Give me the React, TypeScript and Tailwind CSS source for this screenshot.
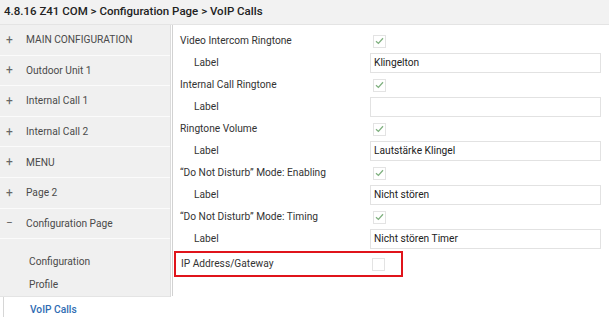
import React from "react";

type Row = {
  label: string;
  sub?: boolean;
  kind: "check" | "input";
  value?: string;
};

const rows: Row[] = [
  { label: "Video Intercom Ringtone", kind: "check" },
  { label: "Label", sub: true, kind: "input", value: "Klingelton" },
  { label: "Internal Call Ringtone", kind: "check" },
  { label: "Label", sub: true, kind: "input", value: "" },
  { label: "Ringtone Volume", kind: "check" },
  { label: "Label", sub: true, kind: "input", value: "Lautstärke Klingel" },
  { label: "\u201CDo Not Disturb\u201D Mode: Enabling", kind: "check" },
  { label: "Label", sub: true, kind: "input", value: "Nicht stören" },
  { label: "\u201CDo Not Disturb\u201D Mode: Timing", kind: "check" },
  { label: "Label", sub: true, kind: "input", value: "Nicht stören Timer" },
];

const menu = [
  "MAIN CONFIGURATION",
  "Outdoor Unit 1",
  "Internal Call 1",
  "Internal Call 2",
  "MENU",
  "Page 2",
];

const Check = ({ on }: { on: boolean }) => (
  <div className="w-[13px] h-[13px] border border-[#e3e3e3] bg-white flex items-center justify-center">
    {on && (
      <svg width="9" height="8" viewBox="0 0 9 8">
        <path d="M1 4.2 L3.4 6.4 L8 1.2" fill="none" stroke="#7fb07f" strokeWidth="1.3" />
      </svg>
    )}
  </div>
);

const SideItem = ({ text, open }: { text: string; open?: boolean }) => (
  <div className="h-[30.6px] flex items-center border-b border-[#fbfbfb] text-[#4a4a4a]">
    <span className="w-[26px] pl-[6px] text-[12px] text-[#666]">{open ? "−" : "+"}</span>
    <span>{text}</span>
  </div>
);

export default function App() {
  return (
    <div
      className="w-[609px] h-[317px] bg-white overflow-hidden text-[10.2px] text-[#333]"
      style={{ fontFamily: "Roboto, Lato, sans-serif" }}
    >
      <div className="h-[25px] bg-[#f2f2f2] border-b border-[#e4e4e4] flex items-center pl-[4px] text-[11.5px] font-medium text-[#222]">
        4.8.16 Z41 COM &gt; Configuration Page &gt; VoIP Calls
      </div>
      <div className="flex">
        <div className="w-[171px] shrink-0 flex flex-col">
          <div className="bg-[#f0f0f0] border-r border-[#dcdcdc]">
            {menu.map((m) => (
              <SideItem key={m} text={m} />
            ))}
            <SideItem text="Configuration Page" open />
            <div className="h-[24px] flex items-center pl-[29px] mt-[10px] text-[#4a4a4a]">Configuration</div>
            <div className="h-[24px] flex items-center pl-[29px] border-b border-[#e4e4e4] text-[#4a4a4a]">Profile</div>
          </div>
          <div className="h-[24px] flex items-center pl-[29px] bg-white text-[#2f6cb3] font-medium border-l border-[#d6d6d6] ml-[3px]">
            <span className="-ml-[3px]">VoIP Calls</span>
          </div>
        </div>
        <div className="flex-1 h-[271px] border-l border-[#d2d2d2] ml-[1px] pt-[5px]">
          {rows.map((r, i) => (
            <div key={i} className="h-[22px] flex items-center">
              <div className={`w-[197px] ${r.sub ? "pl-[21px]" : "pl-[7px]"}`}>{r.label}</div>
              {r.kind === "check" && (
                <div className="pl-[3px]">
                  <Check on />
                </div>
              )}
              {r.kind === "input" && (
                <div className="w-[231px] h-[20px] border border-[#e2e2e2] flex items-center pl-[3px] text-[#222]">
                  {r.value}
                </div>
              )}
            </div>
          ))}
          <div className="ml-[1px] mt-[1px] w-[229px] h-[26px] border-2 border-[#e0141b] flex items-center">
            <div className="w-[196px] pl-[5px]">IP Address/Gateway</div>
            <Check on={false} />
          </div>
        </div>
      </div>
    </div>
  );
}
